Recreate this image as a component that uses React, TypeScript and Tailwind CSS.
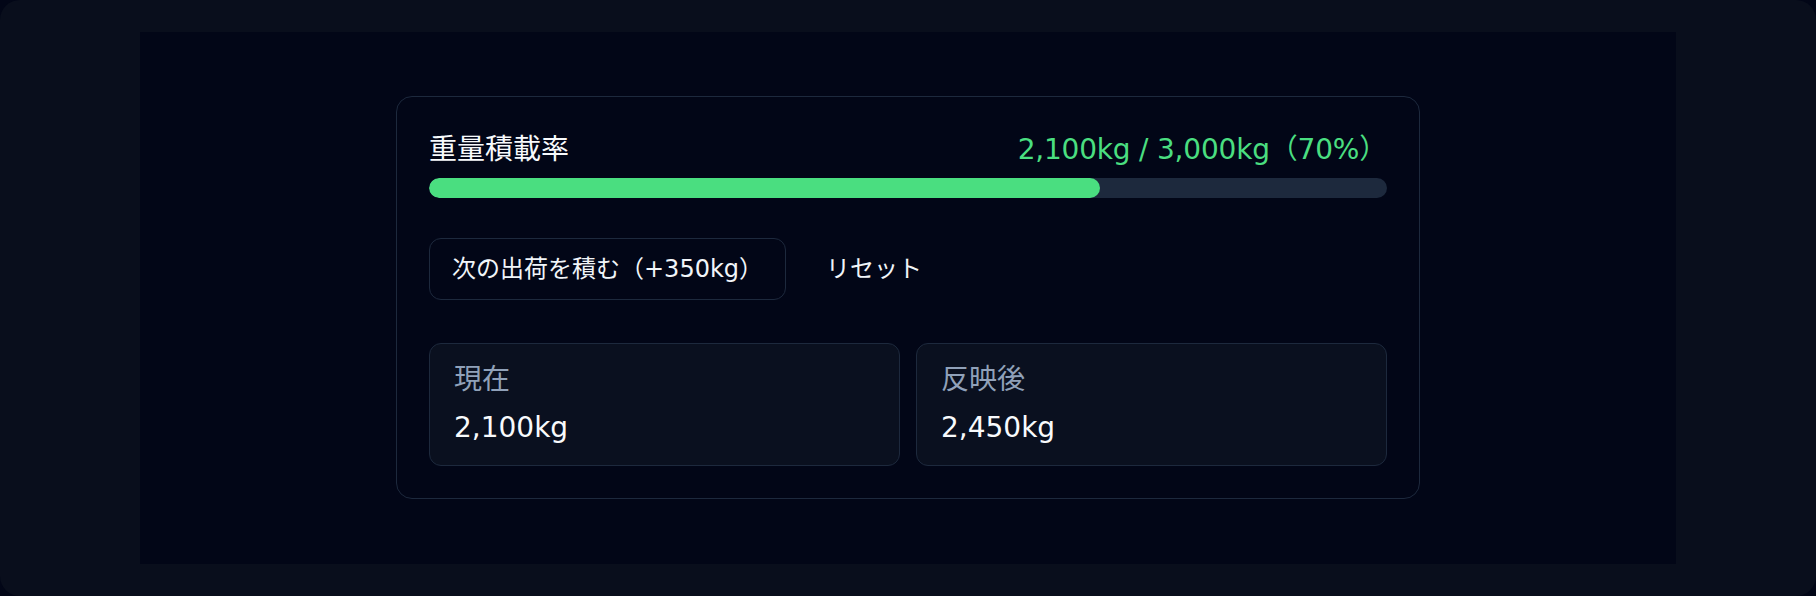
import React from "react";

function Stat({ label, value }: { label: string; value: string }) {
  return (
    <div className="flex flex-col rounded-xl border border-slate-800 bg-[#0a101f] px-6 pt-4 pb-[17px]">
      <div className="text-[28px] leading-10 text-slate-400">{label}</div>
      <div className="mt-2 text-[28px] leading-10 text-slate-50">{value}</div>
    </div>
  );
}

export default function App() {
  const current = 2100;
  const max = 3000;
  const pct = Math.round((current / max) * 100);
  return (
    <div className="bg-[#020617] font-['DejaVu_Sans','Noto_Sans_CJK_JP',sans-serif]">
      <div className="flex h-[596px] flex-col rounded-[20px] bg-[#090e1c] py-8">
        <div className="mx-auto flex w-full max-w-[1536px] flex-1 items-start justify-center bg-[#020617] pt-16">
          <div className="w-full max-w-5xl rounded-2xl border border-slate-800 bg-[#020617] p-8">
            <div className="flex items-center justify-between">
              <div className="text-[28px] leading-[42px] text-slate-50">重量積載率</div>
              <div className="text-[28px] leading-[42px] tracking-[-0.2px] text-[#4ade80]">2,100kg / 3,000kg（70%）</div>
            </div>
            <div className="mt-[7px] h-5 w-full overflow-hidden rounded-full bg-slate-800">
              <div className="h-full rounded-full bg-[#4ade80]" style={{ width: `${pct}%` }} />
            </div>
            <div className="mt-10 flex items-center gap-4">
              <button className="rounded-xl border border-slate-800 px-[22px] py-3 text-2xl leading-9 text-slate-100">
                次の出荷を積む（+350kg）
              </button>
              <button className="px-6 py-3 text-2xl leading-9 text-slate-100">リセット</button>
            </div>
            <div className="mt-[43px] grid grid-cols-2 gap-4">
              <Stat label="現在" value="2,100kg" />
              <Stat label="反映後" value="2,450kg" />
            </div>
          </div>
        </div>
      </div>
    </div>
  );
}
